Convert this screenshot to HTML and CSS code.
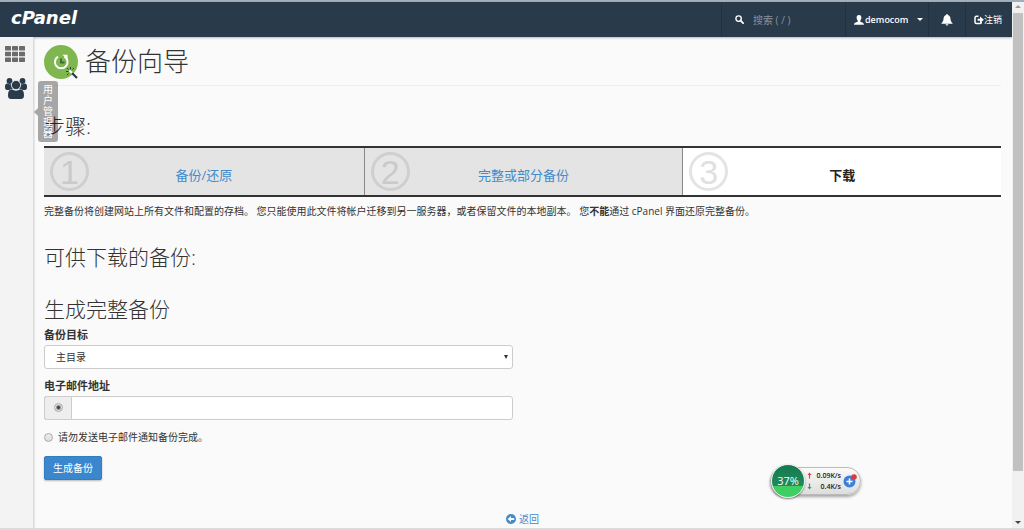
FILE: index.html
```html
<!DOCTYPE html>
<html lang="zh-CN">
<head>
<meta charset="utf-8">
<meta name="viewport" content="width=device-width, initial-scale=1">
<title>cPanel - 备份向导</title>
<link rel="stylesheet" href="styles.css">
</head>
<body>
<div class="window">
  <div class="page">
    <header class="topbar">
      <a class="logo" href="#">cPanel</a>
      <label class="search">
        <svg class="search-icon" viewBox="0 0 10 10" aria-hidden="true"><circle cx="4" cy="4" r="3" fill="none" stroke="#fff" stroke-width="1.5"/><path d="M6.2 6.2L9 9" stroke="#fff" stroke-width="1.9" stroke-linecap="round"/></svg>
        <input class="search-input" type="search" placeholder="搜索 ( / )" aria-label="搜索">
      </label>
      <button class="top-item user" type="button">
        <svg class="user-icon" viewBox="0 0 10 10" aria-hidden="true"><path d="M5 0C3.300 0 2.500 1.200 2.600 2.700 2.700 4 3.200 5 3.800 5.600V6.600C3 7.200.2 7.400 0 9.800H10C9.800 7.400 7 7.200 6.200 6.600V5.600C6.800 5 7.300 4 7.400 2.700 7.500 1.200 6.700 0 5 0Z" fill="#fff"/></svg>
        <span>democom</span>
        <i class="caret"></i>
      </button>
      <button class="top-item bell" type="button" aria-label="通知">
        <svg class="bell-icon" viewBox="0 0 12 12" aria-hidden="true"><path d="M6 0C5.400 0 5.200.5 5.200 1 3.500 1.300 2.700 2.700 2.600 4.300 2.500 6.500 2 8 .4 9.200V9.700H11.600V9.200C10 8 9.500 6.500 9.400 4.300 9.300 2.700 8.500 1.300 6.800 1 6.800.5 6.600 0 6 0ZM4.600 10.200A1.400 1.400 0 0 0 7.400 10.200Z" fill="#fff"/></svg>
      </button>
      <a class="top-item logout" href="#">
        <svg class="logout-icon" viewBox="0 0 10 10" aria-hidden="true"><path d="M4.500 1.200H2.500Q1 1.200 1 2.700V7Q1 8.500 2.500 8.500H6Q7.200 8.500 7.200 7.400V6.800" fill="none" stroke="#fff" stroke-width="1.500"/><path d="M3.600 3.700H6V1.400L9.900 4.700 6 8V5.800H3.600Z" fill="#fff"/></svg>
        <span>注销</span>
      </a>
    </header>
    <div class="body">
      <nav class="sidebar" aria-label="侧栏">
        <a class="side-link" href="#" aria-label="主页">
          <svg class="grid-icon" viewBox="0 0 20 16" fill="#6b6b6b" aria-hidden="true"><rect width="6" height="4.500" rx=".6"/><rect x="7" width="6" height="4.500" rx=".6"/><rect x="14" width="6" height="4.500" rx=".6"/><rect y="5.700" width="6" height="4.500" rx=".6"/><rect x="7" y="5.700" width="6" height="4.500" rx=".6"/><rect x="14" y="5.700" width="6" height="4.500" rx=".6"/><rect y="11.400" width="6" height="4.500" rx=".6"/><rect x="7" y="11.400" width="6" height="4.500" rx=".6"/><rect x="14" y="11.400" width="6" height="4.500" rx=".6"/></svg>
        </a>
        <a class="side-link users" href="#" aria-label="用户管理器">
          <svg class="users-icon" viewBox="0 0 22 21" fill="#293a4a" aria-hidden="true"><circle cx="4.500" cy="3" r="2.900"/><circle cx="17.500" cy="3" r="2.900"/><path d="M0 9Q0 5.500 2 5.500 4.500 7 6.500 5.800 6 9 8 10.800 5.500 10.800 4.500 12H2Q0 12 0 9ZM22 9Q22 5.500 20 5.500 17.500 7 15.500 5.800 16 9 14 10.800 16.500 10.800 17.500 12H20Q22 12 22 9Z"/><circle cx="11" cy="7" r="4.600" stroke="#f3f3f3" stroke-width=".8"/><path d="M3 17.500Q3 11.300 6.700 11.300 11 14.200 15.300 11.300 19 11.300 19 17.500 19 21 15.800 21H6.200Q3 21 3 17.500Z"/></svg>
          <span class="tooltip">用户管理器</span>
        </a>
      </nav>
      <main class="content">
        <div class="page-head">
          <svg class="wizard-icon" viewBox="0 0 34 34" aria-hidden="true"><circle cx="17" cy="17" r="17" fill="#7fb64f"/><path d="M20.500 11.600A6.300 6.300 0 1 1 14 11.600" fill="none" stroke="#fff" stroke-width="2"/><path d="M18.500 9.800H23.500V14.800Z" fill="#fff"/><path d="M17 13.500V17.500H20.500" fill="none" stroke="#3f6b32" stroke-width="1.800"/><path d="M28 28L33 33" stroke="#293a4a" stroke-width="2.200"/><path d="M26.500 22V24.500M22 26.500H24.500M30 23L28.500 24.500M23 23L24.500 24.500M23 30L24.500 28.500" stroke="#293a4a" stroke-width="1"/><path d="M25.500 25.500L28 28" stroke="#fff" stroke-width="2"/></svg>
          <h1 class="title">备份向导</h1>
        </div>
        <h2 class="heading">步骤:</h2>
        <ol class="steps">
          <li class="step"><span class="num">1</span><a class="step-label" href="#">备份/还原</a></li>
          <li class="step"><span class="num">2</span><a class="step-label" href="#">完整或部分备份</a></li>
          <li class="step current"><span class="num">3</span><strong class="step-label">下载</strong></li>
        </ol>
        <p class="intro">完整备份将创建网站上所有文件和配置的存档。 您只能使用此文件将帐户迁移到另一服务器，或者保留文件的本地副本。 您<strong>不能</strong>通过 cPanel 界面还原完整备份。</p>
        <h2 class="heading downloads">可供下载的备份:</h2>
        <h2 class="heading">生成完整备份</h2>
        <form class="form">
          <label class="label" for="dest">备份目标</label>
          <div class="select-wrap">
            <select class="control" id="dest"><option>主目录</option></select>
          </div>
          <label class="label" for="email">电子邮件地址</label>
          <div class="group">
            <span class="addon"><input class="radio" type="radio" name="notify" aria-label="发送电子邮件通知" checked></span>
            <input class="control email" id="email" type="email">
          </div>
          <div class="no-mail">
            <input class="radio" type="radio" name="notify" id="none"><label for="none">请勿发送电子邮件通知备份完成。</label>
          </div>
          <button class="submit" type="button">生成备份</button>
        </form>
        <a class="back" href="#">
          <svg class="back-icon" viewBox="0 0 10 10" aria-hidden="true"><circle cx="5" cy="5" r="5" fill="#428bca"/><path d="M1.600 5L5 2V4H8.200V6H5V8Z" fill="#fff"/></svg>
          <span>返回</span>
        </a>
      </main>
    </div>
  </div>
  <div class="scrollbar" aria-hidden="true"><i class="arrow up"></i><i class="thumb"></i><i class="arrow down"></i></div>
  <aside class="monitor">
    <div class="ball">37%</div>
    <div class="rates">
      <div class="rate"><svg class="rate-icon" viewBox="0 0 6 7" aria-hidden="true"><path d="M3 0L5.500 3H3.700V7H2.300V3H.5Z" fill="#d64545"/></svg><span>0.09K/s</span></div>
      <div class="rate"><svg class="rate-icon" viewBox="0 0 6 7" aria-hidden="true"><path d="M3 7L5.500 4H3.700V0H2.300V4H.5Z" fill="#3a9a5c"/></svg><span>0.4K/s</span></div>
    </div>
    <svg class="plus" viewBox="0 0 14 14" aria-hidden="true"><circle cx="6.500" cy="7.500" r="6" fill="#3c7fd8"/><path d="M6.500 4.500V10.500M3.500 7.500H9.500" stroke="#fff" stroke-width="1.500"/><circle cx="11" cy="3" r="2.800" fill="#dc3a3a"/></svg>
  </aside>
</div>
</body>
</html>
```
FILE: styles.css
```css
* {
  box-sizing: border-box;
}

body {
  margin: 0;
  font: 10px/16px "Open Sans", "Noto Sans CJK SC", sans-serif;
  color: #333;
  background: #fafafa;
}

button,
input,
select {
  font: inherit;
  color: inherit;
}

a {
  color: #428bca;
  text-decoration: none;
}

.window {
  position: relative;
  display: flex;
  min-height: 100vh;
  border-top: 2px solid #a3aebb;
  border-bottom: 2px solid #dcdcdc;
}

.page {
  flex: 1;
  display: flex;
  flex-direction: column;
}

.topbar {
  display: flex;
  align-items: stretch;
  height: 35px;
  background: #293a4a;
  color: #fff;
  box-shadow: 0 1px 2px #0004;
}

.logo {
  margin-right: auto;
  padding-left: 11px;
  color: #fff;
  font: italic 700 18px/32px "DejaVu Sans", sans-serif;
}

.search,
.top-item {
  display: flex;
  align-items: center;
  border: 0;
  border-left: 1px solid #223240;
}

.search {
  width: 124px;
  padding-left: 13px;
  gap: 9px;
}

.search-icon {
  width: 9px;
  height: 9px;
}

.logout-icon,
.user-icon {
  width: 10px;
  height: 10px;
}

.search-input {
  width: 70px;
  padding: 0;
  border: 0;
  background: none;
  outline: 0;
}

.search-input::placeholder {
  color: #8793a0;
  opacity: 1;
}

.top-item {
  padding: 0;
  background: none;
  color: #fff;
}

.user {
  width: 83px;
  padding-left: 8px;
  gap: 1px;
}

.user span {
  font-size: 9px;
  font-weight: 600;
}

.caret {
  margin-left: 8px;
  border: 3px solid transparent;
  border-top-color: #fff;
  border-bottom: 0;
}

.bell {
  width: 37px;
  justify-content: center;
}

.bell-icon {
  width: 12px;
  height: 12px;
}

.logout {
  width: 47px;
  padding-left: 8px;
}

.logout span {
  font-size: 9px;
}

.body {
  flex: 1;
  display: flex;
}

.sidebar {
  width: 34px;
  padding: 9px 0 0 5px;
  background: #f3f3f3;
  border-right: 1px solid #dcdcdc;
  box-shadow: 1px 0 1px #0001;
}

.side-link {
  position: relative;
  display: block;
  width: 22px;
  margin-bottom: 16px;
}

.grid-icon {
  display: block;
  width: 20px;
  height: 16px;
}

.users-icon {
  display: block;
  width: 22px;
  height: 21px;
}

.tooltip {
  position: absolute;
  top: 3px;
  left: 33px;
  width: 20px;
  padding: 3px 5px;
  border-radius: 3px;
  background: #0005;
  color: #fff;
  line-height: 11px;
  text-align: center;
}

.tooltip::before {
  content: "";
  position: absolute;
  top: 27px;
  left: -4px;
  border: 4px solid transparent;
  border-left: 0;
  border-right-color: #0005;
}

.content {
  flex: 1;
  display: flex;
  flex-direction: column;
  padding: 5px 11px 0 10px;
}

.page-head {
  display: flex;
  align-items: center;
  gap: 7px;
  height: 44px;
  margin-bottom: 26px;
  padding-bottom: 4px;
  border-bottom: 1px solid #eee;
}

.wizard-icon {
  width: 34px;
  height: 34px;
}

.title,
.heading {
  margin: 0;
  font-weight: 300;
}

.title {
  padding-bottom: 2px;
  font-size: 26px;
  line-height: 32px;
}

.heading {
  font-size: 21px;
  line-height: 28px;
}

.steps {
  display: grid;
  grid-template-columns: 321fr 319fr 318fr;
  margin: 6px 0;
  padding: 0;
  list-style: none;
  border: solid #333;
  border-width: 2px 0;
}

.step {
  position: relative;
  display: flex;
  justify-content: center;
  padding: 17px 0 10px;
  background: #e4e4e4;
  border-right: 1px solid #888;
  font-size: 13px;
  line-height: 20px;
}

.current {
  background: #fff;
  border-right: 0;
  color: #222;
}

.num {
  position: absolute;
  top: 4px;
  left: 6px;
  width: 39px;
  height: 39px;
  border: 3px solid #cfcfcf;
  border-radius: 50%;
  color: #cacaca;
  font: 34px/34px "Liberation Sans", sans-serif;
  text-align: center;
}

.current .num {
  border-color: #e4e4e4;
  color: #e0e0e0;
}

.intro {
  margin: 0;
}

.downloads {
  margin: 24px 0;
}

.form {
  display: flex;
  flex-direction: column;
  align-items: flex-start;
  padding-top: 4px;
}

.label {
  margin-bottom: 2px;
  font-size: 11px;
  font-weight: 700;
}

.select-wrap,
.group {
  display: flex;
  width: 49%;
  margin-bottom: 9px;
}

.select-wrap {
  position: relative;
}

.select-wrap::after {
  content: "";
  position: absolute;
  top: 10px;
  right: 5px;
  border: 2px solid transparent;
  border-top: 4px solid #333;
  border-bottom: 0;
}

.control {
  flex: 1;
  min-width: 0;
  height: 24px;
  padding: 0 11px;
  border: 1px solid #ccc;
  border-radius: 3px;
  background: #fff;
  appearance: none;
}

.addon {
  display: flex;
  justify-content: center;
  width: 27px;
  padding-top: 6px;
  border: 1px solid #ccc;
  border-right: 0;
  border-radius: 3px 0 0 3px;
  background: #eee;
}

.email {
  border-radius: 0 3px 3px 0;
}

.radio {
  width: 9px;
  height: 9px;
  margin: 0;
  border: 1px solid #aaa;
  border-radius: 50%;
  background: linear-gradient(#eee, #ddd);
  appearance: none;
}

.radio:checked {
  background: radial-gradient(circle, #444 1px, #e4e4e4 3px);
}

.no-mail {
  display: flex;
  align-items: center;
  gap: 5px;
  margin-bottom: 11px;
}

.submit {
  height: 24px;
  padding: 0 8px;
  border: 1px solid #357ebd;
  border-radius: 2px;
  background: #3a87cd;
  box-shadow: 0 1px 2px #0004;
  color: #fff;
}

.back {
  display: flex;
  align-items: center;
  gap: 3px;
  margin: auto auto 1px;
}

.back-icon {
  width: 10px;
  height: 10px;
}

.scrollbar {
  display: flex;
  flex-direction: column;
  align-items: center;
  width: 12px;
  background: #f1f1f1;
}

.thumb {
  flex: 1;
  width: 10px;
  margin: 5px 0 50px;
  background: #c1c1c1;
}

.arrow {
  border: 3px solid transparent;
}

.up {
  margin-top: 3px;
  border-top: 0;
  border-bottom-color: #999;
}

.down {
  margin-bottom: 4px;
  border-bottom: 0;
  border-top-color: #444;
}

.monitor {
  position: absolute;
  top: 465px;
  right: 163px;
  display: flex;
  align-items: center;
  height: 28px;
  border: 1px solid #bbb;
  border-radius: 14px;
  padding-right: 3px;
  background: linear-gradient(#fafafa, #ddd);
  box-shadow: 0 2px 3px #0005;
}

.ball {
  width: 34px;
  height: 34px;
  border: 1px solid #eee;
  border-radius: 50%;
  background: linear-gradient(#177a50 0, #1d8a59 64%, #3fce62 66%);
  box-shadow: 0 1px 2px #0007;
  color: #fff;
  font-size: 11px;
  line-height: 32px;
  text-align: center;
}

.rates {
  width: 34px;
  margin: 0 2px;
  font-size: 7px;
  font-weight: 600;
  line-height: 11px;
  color: #222;
}

.rate {
  display: flex;
  align-items: center;
  justify-content: space-between;
}

.rate-icon {
  width: 5px;
  height: 7px;
}

.plus {
  width: 14px;
  height: 14px;
}
```
